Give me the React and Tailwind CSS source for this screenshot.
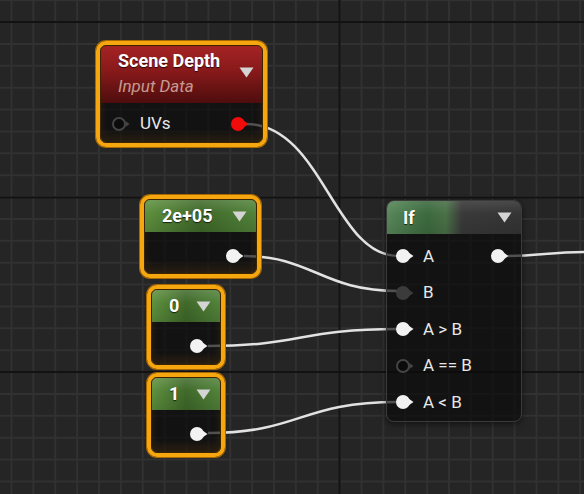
import React from 'react';

// --- petits éléments réutilisables ---

// pin d'un noeud : cercle + petite flèche à droite
const Pin = ({ kind = 'on', color = '#f2f2f2' }) => {
    if (kind === 'off') {
        return (
            <svg width="20" height="16" viewBox="0 0 20 16" className="shrink-0">
                <circle cx="8" cy="8" r="6" fill="#0b0b0b" stroke="#444444" strokeWidth="2" />
                <polygon points="14.5,5 18.5,8 14.5,11" fill="#444444" />
            </svg>
        );
    }
    return (
        <svg width="20" height="16" viewBox="0 0 20 16" className="shrink-0">
            <circle cx="8" cy="8" r="7" fill={color} />
            <polygon points="13.5,4.5 18.5,8 13.5,11.5" fill={color} />
        </svg>
    );
};

// triangle du menu déroulant dans les en-têtes
const Caret = () => (
    <svg width="15" height="11" viewBox="0 0 15 11" className="shrink-0">
        <polygon points="0.5,0.5 14.5,0.5 7.5,10.5" fill="#d4d4d4" />
    </svg>
);

// cadre orange des noeuds sélectionnés (le corps reste transparent pour laisser voir la grille)
const Selected = ({ className, children }) => (
    <div className={`absolute rounded-[10px] border-[4px] border-[#f6a60e] shadow-[0_0_0_1px_#a86800,inset_0_0_0_1px_#ffc13a] ${className}`}>
        <div className="flex h-full flex-col overflow-hidden rounded-[6px] border border-[#3c2400] bg-[rgba(10,10,10,0.68)] shadow-[inset_0_-6px_8px_rgba(255,150,0,0.1)]">
            {children}
        </div>
    </div>
);

// noeud constante verte (2e+05, 0, 1)
const ConstNode = ({ className, value }) => (
    <Selected className={className}>
        <div className="flex h-[32px] shrink-0 items-center justify-between bg-[linear-gradient(180deg,rgba(255,255,255,0.14),rgba(0,0,0,0)_40%,rgba(0,0,0,0.12)),linear-gradient(90deg,#5e913e,#3f692a_50%,#52833a)] pl-[17px] pr-[9px]">
            <span className="text-[18px] font-bold leading-none text-white [text-shadow:0_1px_1px_rgba(0,0,0,0.7)]">{value}</span>
            <Caret />
        </div>
        <div className="flex flex-1 items-center justify-end pr-[11px] pt-[6px]">
            <Pin />
        </div>
    </Selected>
);

const grid = () => {
    const lines = [];
    for (let k = 0; k < 27; k++) {
        const x = 11.5 + k * 21.875;
        lines.push(<line key={'x' + k} x1={x} y1="0" x2={x} y2="494" stroke="#313131" strokeWidth="2" />);
    }
    for (let k = 0; k < 24; k++) {
        const y = 0.125 + k * 21.875;
        lines.push(<line key={'y' + k} x1="0" y1={y} x2="584" y2={y} stroke="#313131" strokeWidth="2" />);
    }
    return lines;
};

const ifRows = [
    { label: 'A', kind: 'on' },
    { label: 'B', kind: 'dim' },
    { label: 'A > B', kind: 'on' },
    { label: 'A == B', kind: 'off' },
    { label: 'A < B', kind: 'on' },
];

export default function App() {
    return (
        <div className="relative h-[494px] w-[584px] overflow-hidden bg-[#252525] font-['Roboto','Liberation_Sans',sans-serif]">
            {/* --- GRILLE --- */}
            <svg className="absolute inset-0" width="584" height="494">
                {grid()}
                <line x1="339.5" y1="0" x2="339.5" y2="494" stroke="#121212" strokeWidth="2" />
                <line x1="0" y1="22" x2="584" y2="22" stroke="#121212" strokeWidth="2" />
                <line x1="0" y1="197.5" x2="584" y2="197.5" stroke="#121212" strokeWidth="2" />
                <line x1="0" y1="372" x2="584" y2="372" stroke="#121212" strokeWidth="2" />
            </svg>

            {/* --- FILS --- */}
            <svg className="absolute inset-0" width="584" height="494" fill="none" stroke="#e2e2e2" strokeWidth="2.5">
                <path d="M246 124 C 322 124, 334 256, 398 256" />
                <path d="M244 256 C 312 256, 322 291, 398 291" />
                <path d="M208 346 C 300 346, 300 329, 398 329" />
                <path d="M208 433 C 300 433, 300 402, 398 402" />
                <path d="M508 256 C 540 256, 550 252, 584 252" />
            </svg>

            {/* --- SCENE DEPTH --- */}
            <Selected className="left-[96px] top-[41px] h-[106px] w-[171px]">
                <div className="flex h-[57px] shrink-0 justify-between bg-[linear-gradient(180deg,#a52323,#87191a_45%,#4e0d0d)] pl-[17px] pr-[8px] pt-[4px]">
                    <div className="flex flex-col">
                        <span className="text-[18px] font-bold leading-[22px] text-white [text-shadow:0_1px_1px_rgba(0,0,0,0.7)]">Scene Depth</span>
                        <span className="mt-[3px] text-[17px] italic leading-[22px] text-[#c79a90]">Input Data</span>
                    </div>
                    <div className="mt-[17px]">
                        <Caret />
                    </div>
                </div>
                <div className="flex flex-1 items-center pl-[10px] pr-[12px] pt-[2px]">
                    <Pin kind="off" />
                    <span className="ml-[9px] text-[17px] leading-none text-[#e8e8e8]">UVs</span>
                    <div className="flex-1" />
                    <Pin color="#f20b0b" />
                </div>
            </Selected>

            {/* --- CONSTANTES --- */}
            <ConstNode className="left-[140px] top-[195px] h-[83px] w-[121px]" value="2e+05" />
            <ConstNode className="left-[147px] top-[285px] h-[84px] w-[78px]" value="0" />
            <ConstNode className="left-[147px] top-[373px] h-[84px] w-[78px]" value="1" />

            {/* --- IF --- */}
            <div className="absolute left-[386px] top-[200px] flex h-[222px] w-[136px] flex-col overflow-hidden rounded-[8px] border border-[#3a3a3a] bg-[rgba(10,10,10,0.68)] shadow-[0_2px_6px_rgba(0,0,0,0.5)]">
                <div className="flex h-[33px] shrink-0 items-center justify-between bg-[linear-gradient(180deg,rgba(255,255,255,0.1),rgba(0,0,0,0)_40%,rgba(0,0,0,0.1)),linear-gradient(90deg,#58875a,#3c6a3e_30%,#4a7047_44%,#393939_56%,#343434)] pl-[16px] pr-[9px]">
                    <span className="text-[18px] font-bold leading-none text-white [text-shadow:0_1px_1px_rgba(0,0,0,0.7)]">If</span>
                    <Caret />
                </div>
                <div className="flex flex-col pt-[4px]">
                    {ifRows.map((row, i) => (
                        <div key={row.label} className="flex h-[36.5px] items-center pl-[8px] pr-[11px]">
                            {row.kind === 'dim' ? <Pin color="#3b3b3b" /> : <Pin kind={row.kind} />}
                            <span className="ml-[8px] text-[17px] leading-none text-[#e8e8e8]">{row.label}</span>
                            <div className="flex-1" />
                            {i === 0 && <Pin />}
                        </div>
                    ))}
                </div>
            </div>
        </div>
    );
}
